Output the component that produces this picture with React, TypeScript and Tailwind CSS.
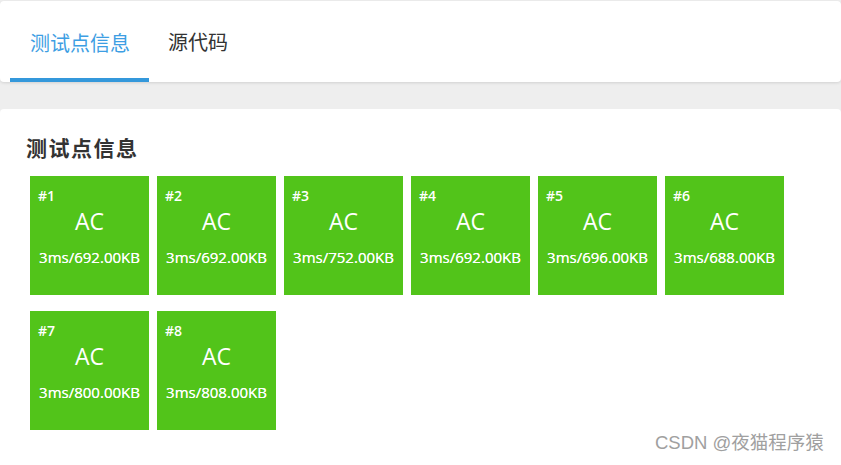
import React from "react";

const cases = [
  { id: 1, info: "3ms/692.00KB" },
  { id: 2, info: "3ms/692.00KB" },
  { id: 3, info: "3ms/752.00KB" },
  { id: 4, info: "3ms/692.00KB" },
  { id: 5, info: "3ms/696.00KB" },
  { id: 6, info: "3ms/688.00KB" },
  { id: 7, info: "3ms/800.00KB" },
  { id: 8, info: "3ms/808.00KB" },
];

const font = { fontFamily: '"Open Sans", "Noto Sans CJK SC", sans-serif' };

export default function App() {
  return (
    <div className="relative w-[841px] h-[465px] bg-[#eeeeee] overflow-hidden" style={font}>
      <div className="mt-px h-[81px] bg-white rounded-[4px] shadow-[0_1px_3px_rgba(0,0,0,0.12)] flex items-end pl-[10px]">
        <div className="w-[139px] h-[81px] flex flex-col">
          <div className="flex-1 flex items-center pl-[20px] pt-[6px] text-[20px] text-[#3d9ee3] font-['Noto_Sans_CJK_SC']">测试点信息</div>
          <div className="h-[4px] bg-[#3498db]" />
        </div>
        <div className="h-[81px] flex items-center pt-[2px] pl-[19px] text-[20px] text-[#333]">源代码</div>
      </div>
      <div className="mt-[27px] bg-white rounded-[4px] h-[400px] pl-[26px] pt-[24px]">
        <div className="text-[21px] font-bold text-[#333] leading-[30px] tracking-[1.5px]">测试点信息</div>
        <div className="mt-[13px] pl-[4px] grid grid-cols-[repeat(6,119px)] gap-x-[8px] gap-y-[16px]">
          {cases.map((c) => (
            <div key={c.id} className="h-[119px] bg-[#52c41a] text-white flex flex-col px-[8px] pt-[11px]">
              <div className="text-[14px] font-semibold leading-[18px]">#{c.id}</div>
              <div className="text-center text-[23px] leading-[30px] mt-[1px]">AC</div>
              <div className="text-center text-[15px] leading-[20px] mt-[11px] -mx-[8px] [text-shadow:0_0_0.4px_#fff]">{c.info}</div>
            </div>
          ))}
        </div>
      </div>
      <div className="absolute left-[655px] top-[431px] text-[18.5px] leading-[24px] text-[#a0a0a0] font-['Liberation_Sans','Noto_Sans_CJK_SC',sans-serif]">
        CSDN @夜猫程序猿
      </div>
    </div>
  );
}
